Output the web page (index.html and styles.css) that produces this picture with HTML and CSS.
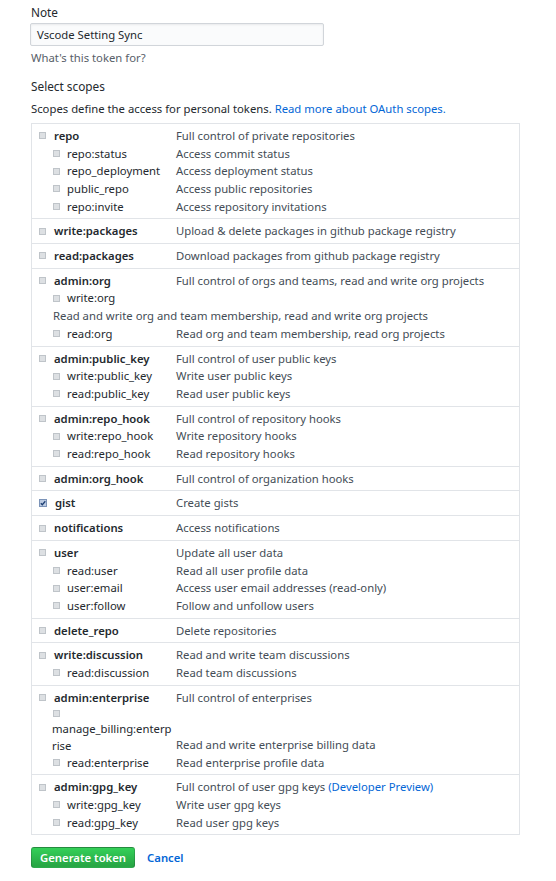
FILE: index.html
```html
<!DOCTYPE html>
<html lang="en">
<head>
  <meta charset="UTF-8">
  <title>New personal access token</title>
  <link rel="stylesheet" href="styles.css">
</head>
<body>
  <form class="token-form">
    <div class="field">
      <label class="field-label">Note</label>
      <div class="input">Vscode Setting Sync</div>
      <p class="note">What's this token for?</p>
    </div>

    <div class="field">
      <label class="field-label">Select scopes</label>
      <p class="lead">Scopes define the access for personal tokens. <a href="#">Read more about OAuth scopes.</a></p>

      <div class="scopes">
        <div class="group">
          <div class="row top"><span class="name"><span class="cb"></span>repo</span><span class="desc">Full control of private repositories</span></div>
          <div class="row sub"><span class="name"><span class="cb"></span>repo:status</span><span class="desc">Access commit status</span></div>
          <div class="row sub"><span class="name"><span class="cb"></span>repo_deployment</span><span class="desc">Access deployment status</span></div>
          <div class="row sub"><span class="name"><span class="cb"></span>public_repo</span><span class="desc">Access public repositories</span></div>
          <div class="row sub"><span class="name"><span class="cb"></span>repo:invite</span><span class="desc">Access repository invitations</span></div>
        </div>
        <div class="group">
          <div class="row top"><span class="name"><span class="cb"></span>write:packages</span><span class="desc">Upload &amp; delete packages in github package registry</span></div>
        </div>
        <div class="group">
          <div class="row top"><span class="name"><span class="cb"></span>read:packages</span><span class="desc">Download packages from github package registry</span></div>
        </div>
        <div class="group">
          <div class="row top"><span class="name"><span class="cb"></span>admin:org</span><span class="desc">Full control of orgs and teams, read and write org projects</span></div>
          <div class="row sub"><span class="name"><span class="cb"></span>write:org</span></div>
          <div class="wrap-desc">Read and write org and team membership, read and write org projects</div>
          <div class="row sub"><span class="name"><span class="cb"></span>read:org</span><span class="desc">Read org and team membership, read org projects</span></div>
        </div>
        <div class="group">
          <div class="row top"><span class="name"><span class="cb"></span>admin:public_key</span><span class="desc">Full control of user public keys</span></div>
          <div class="row sub"><span class="name"><span class="cb"></span>write:public_key</span><span class="desc">Write user public keys</span></div>
          <div class="row sub"><span class="name"><span class="cb"></span>read:public_key</span><span class="desc">Read user public keys</span></div>
        </div>
        <div class="group">
          <div class="row top"><span class="name"><span class="cb"></span>admin:repo_hook</span><span class="desc">Full control of repository hooks</span></div>
          <div class="row sub"><span class="name"><span class="cb"></span>write:repo_hook</span><span class="desc">Write repository hooks</span></div>
          <div class="row sub"><span class="name"><span class="cb"></span>read:repo_hook</span><span class="desc">Read repository hooks</span></div>
        </div>
        <div class="group">
          <div class="row top"><span class="name"><span class="cb"></span>admin:org_hook</span><span class="desc">Full control of organization hooks</span></div>
        </div>
        <div class="group">
          <div class="row top"><span class="name"><span class="cb checked"><svg viewBox="0 0 8 8" width="8" height="8"><path d="M1.8 4.2 L3.3 5.7 L6.3 2.3" fill="none" stroke="#1d3f73" stroke-width="1.3"/></svg></span>gist</span><span class="desc">Create gists</span></div>
        </div>
        <div class="group">
          <div class="row top"><span class="name"><span class="cb"></span>notifications</span><span class="desc">Access notifications</span></div>
        </div>
        <div class="group">
          <div class="row top"><span class="name"><span class="cb"></span>user</span><span class="desc">Update all user data</span></div>
          <div class="row sub"><span class="name"><span class="cb"></span>read:user</span><span class="desc">Read all user profile data</span></div>
          <div class="row sub"><span class="name"><span class="cb"></span>user:email</span><span class="desc">Access user email addresses (read-only)</span></div>
          <div class="row sub"><span class="name"><span class="cb"></span>user:follow</span><span class="desc">Follow and unfollow users</span></div>
        </div>
        <div class="group">
          <div class="row top"><span class="name"><span class="cb"></span>delete_repo</span><span class="desc">Delete repositories</span></div>
        </div>
        <div class="group">
          <div class="row top"><span class="name"><span class="cb"></span>write:discussion</span><span class="desc">Read and write team discussions</span></div>
          <div class="row sub"><span class="name"><span class="cb"></span>read:discussion</span><span class="desc">Read team discussions</span></div>
        </div>
        <div class="group">
          <div class="row top"><span class="name"><span class="cb"></span>admin:enterprise</span><span class="desc">Full control of enterprises</span></div>
          <div class="row sub broken"><span class="name"><span class="cb-line"><span class="cb"></span></span><span class="wrapped">manage_billing:enterp<br>rise</span></span><span class="desc">Read and write enterprise billing data</span></div>
          <div class="row sub"><span class="name"><span class="cb"></span>read:enterprise</span><span class="desc">Read enterprise profile data</span></div>
        </div>
        <div class="group">
          <div class="row top"><span class="name"><span class="cb"></span>admin:gpg_key</span><span class="desc">Full control of user gpg keys <a href="#">(Developer Preview)</a></span></div>
          <div class="row sub"><span class="name"><span class="cb"></span>write:gpg_key</span><span class="desc">Write user gpg keys</span></div>
          <div class="row sub"><span class="name"><span class="cb"></span>read:gpg_key</span><span class="desc">Read user gpg keys</span></div>
        </div>
      </div>
    </div>

    <div class="actions">
      <button type="button" class="btn-primary">Generate token</button>
      <a href="#" class="cancel">Cancel</a>
    </div>
  </form>
</body>
</html>
```

FILE: styles.css
```css
body {
  margin: 0;
  background-color: #fff;
  color: #24292e;
  font-family: "Noto Sans", "Open Sans", sans-serif;
  font-size: 11.3px;
  line-height: 17.7px;
}
a {
  color: #0366d6;
  text-decoration: none;
}
.token-form {
  padding: 4px 36px 0 31px;
}
.field {
  margin-bottom: 12px;
}
.field-label {
  display: block;
  font-size: 11.8px;
  margin-bottom: 1px;
}
.input {
  width: 280px;
  height: 21px;
  line-height: 21px;
  padding: 0 6px;
  margin-left: -1px;
  border: 1px solid #d1d5da;
  border-radius: 2px;
  background-color: #fafbfc;
  box-shadow: inset 0 1px 2px rgba(27, 31, 35, 0.075);
}
.note {
  margin: 3px 0 0;
  color: #586069;
}
.lead {
  margin: 4px 0 5px;
}
.scopes {
  border: 1px solid #e1e4e8;
  width: 487px;
}
.group {
  padding: 3px 0;
  border-bottom: 1px solid #e1e4e8;
}
.group:last-child {
  border-bottom: none;
}
.row {
  display: grid;
  grid-template-columns: 144px 1fr;
}
.row .name {
  display: flex;
  align-items: center;
}
.row.top .name {
  padding-left: 7px;
  font-weight: 600;
}
.row.sub .name {
  padding-left: 21px;
}
.row.broken {
  align-items: end;
}
.row.broken .name {
  display: block;
  padding-left: 21px;
  margin-left: -1px;
}
.cb-line {
  display: flex;
  align-items: center;
  height: 12px;
  padding-top: 1px;
}
.wrapped {
  display: block;
  line-height: 17px;
}
.desc {
  color: #444d56;
}
.wrap-desc {
  padding-left: 21px;
  color: #444d56;
}
.cb {
  display: inline-block;
  box-sizing: border-box;
  width: 7px;
  height: 7px;
  margin-right: 8px;
  border: 1px solid #bfc4c9;
  background-color: #dde0e3;
  position: relative;
}
.row.sub .cb {
  margin-right: 7px;
}
.row.broken .cb {
  margin-left: 1px;
}
.cb.checked {
  width: 8px;
  height: 8px;
  border-color: #7b93b8;
  background-color: #bccbe2;
}
.cb.checked svg {
  position: absolute;
  left: -1px;
  top: -1px;
}
.actions {
  display: flex;
  align-items: center;
  gap: 12px;
}
.btn-primary {
  font-family: inherit;
  font-size: 11.3px;
  font-weight: 600;
  color: #fff;
  padding: 0 8px;
  height: 21px;
  line-height: 19px;
  border: 1px solid rgba(27, 31, 35, 0.2);
  border-radius: 3px;
  background-image: linear-gradient(-180deg, #34d058 0%, #28a745 90%);
}
.cancel {
  font-weight: 600;
}
```
